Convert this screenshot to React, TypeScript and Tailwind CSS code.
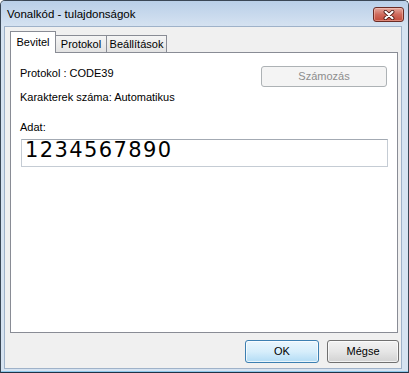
import React from "react";

function CloseButton() {
  return (
    <div className="mt-[6px] w-[31px] h-[15px] rounded-[3px] border border-[#6b2c25] bg-gradient-to-b from-[#e3a99f] via-[#cf6a5c] to-[#c24a39] flex items-center justify-center shadow-[inset_0_0_0_1px_rgba(255,210,200,0.45)]">
      <svg width="12" height="10" viewBox="0 0 12 10">
        <path d="M2.5 1.8 L9.5 8.2 M9.5 1.8 L2.5 8.2" stroke="#4a1a14" strokeWidth="3.8" strokeLinecap="round" fill="none" />
        <path d="M2.5 1.8 L9.5 8.2 M9.5 1.8 L2.5 8.2" stroke="#ffffff" strokeWidth="2.2" strokeLinecap="round" fill="none" />
      </svg>
    </div>
  );
}

export default function App() {
  return (
    <div className="w-[409px] h-[373px] flex flex-col border border-[#3a4756] border-b-[#1f3346] rounded-t-[5px] bg-[#d6e3f1] overflow-hidden font-['Liberation_Sans',Arial,sans-serif] text-[11px] text-black">
      {/* title bar */}
      <div className="h-[25px] shrink-0 flex items-start justify-between pl-[6px] pr-[4px] bg-gradient-to-b from-[#b9cfe8] to-[#d5e2f1]">
        <span className="mt-[6px] leading-[14px] text-[11.5px]">Vonalkód - tulajdonságok</span>
        <CloseButton />
      </div>
      {/* frame + client */}
      <div className="flex-1 flex flex-col pl-[3px] pr-[6px] pb-[2px] border-b border-[#8ec8ea]">
        <div className="flex-1 flex flex-col border border-[#9fb2c9] bg-[#f0f0f0] pl-[5px] pr-[2px] pt-[4px]">
          {/* tabs */}
          <div className="h-[21px] flex items-end">
            <div className="relative z-10 -mb-px w-[46px] h-[22px] border border-b-0 border-[#898c95] bg-white flex justify-center pt-[3px] leading-[14px]">
              Bevitel
            </div>
            <div className="w-[51px] h-[17px] border border-b-0 border-l-0 border-[#898c95] bg-gradient-to-b from-[#f5f5f5] to-[#e3e3e3] flex justify-center pt-px leading-[14px]">
              Protokol
            </div>
            <div className="w-[60px] h-[17px] border border-b-0 border-l-0 border-[#898c95] bg-gradient-to-b from-[#f5f5f5] to-[#e3e3e3] flex justify-center pt-px leading-[14px]">
              Beállítások
            </div>
          </div>
          {/* panel */}
          <div className="w-[388px] h-[281px] border border-[#898c95] bg-white flex flex-col pl-[9px]">
            <div className="mt-[13px] h-[21px] flex justify-between pr-[10px]">
              <span className="leading-[14px]">Protokol : CODE39</span>
              <div className="w-[126px] h-[21px] rounded-[3px] border border-[#adb2b5] bg-[#f4f4f4] flex items-center justify-center text-[#8d8d8d]">
                Számozás
              </div>
            </div>
            <div className="mt-[3px] leading-[14px]">Karakterek száma: Automatikus</div>
            <div className="mt-[16px] leading-[14px]">Adat:</div>
            <div className="mt-[5px] ml-px w-[367px] h-[28px] border border-[#c5ccd4] border-t-[#a3aab3] bg-white pl-[3px] font-['DejaVu_Sans',sans-serif] text-[21px] leading-[20px] tracking-[1.4px] text-black">
              1234567890
            </div>
          </div>
          {/* buttons */}
          <div className="mt-[7px] flex justify-end gap-[8px]">
            <div className="w-[74px] h-[23px] rounded-[3px] border border-[#3c7fb1] bg-gradient-to-b from-[#eaf6fd] via-[#d7eefb] to-[#b2dcf5] shadow-[inset_0_0_0_1px_rgba(255,255,255,0.7)] flex items-center justify-center">
              OK
            </div>
            <div className="w-[72px] h-[23px] rounded-[3px] border border-[#707070] bg-gradient-to-b from-[#f2f2f2] via-[#e6e6e6] to-[#d2d2d2] shadow-[inset_0_0_0_1px_rgba(255,255,255,0.7)] flex items-center justify-center">
              Mégse
            </div>
          </div>
        </div>
      </div>
    </div>
  );
}
